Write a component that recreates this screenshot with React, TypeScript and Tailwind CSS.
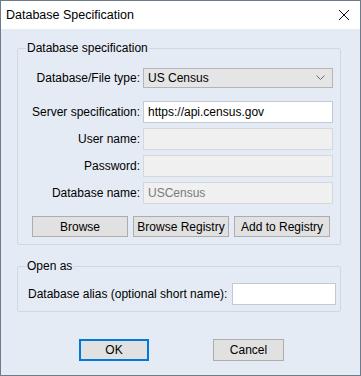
export default function App() {
  const inputBase = "h-[22px] w-[190px] border px-[4px] flex items-center";
  return (
    <div className="w-[361px] h-[376px] border border-[#6e7b8a] bg-[#e5ebf4] flex flex-col font-['Liberation_Sans',Arial,sans-serif] text-[12px] leading-[16px] text-black overflow-hidden">
      <div className="h-[28px] shrink-0 bg-white flex items-center justify-between pl-[5px] pr-[8px]">
        <span className="text-[12.5px]">Database Specification</span>
        <svg width="12" height="12" viewBox="0 0 12 12" className="mr-[2px]">
          <path d="M1 1 L11 11 M11 1 L1 11" stroke="#111" strokeWidth="1" fill="none" />
        </svg>
      </div>
      <div className="flex flex-col pl-[16px] pt-[11px]">
        <fieldset className="w-[324px] border border-[#cfd7e2] rounded-[2px] pt-[12px] pb-[7px] pr-[7px]">
          <legend className="ml-[8px] px-[1px]">Database specification</legend>
          <div className="grid grid-cols-[122px_190px] gap-x-[3px] items-center">
            <span className="text-right whitespace-nowrap">Database/File type:</span>
            <div className="h-[20px] w-[190px] border border-[#b5b5b5] bg-[#e5e5e5] flex items-center justify-between pl-[4px] pr-[7px]">
              <span>US Census</span>
              <svg width="9" height="6" viewBox="0 0 9 6">
                <path d="M0.5 0.5 L4.5 4.5 L8.5 0.5" stroke="#6a6a6a" strokeWidth="1" fill="none" />
              </svg>
            </div>
          </div>
          <div className="grid grid-cols-[122px_190px] gap-x-[3px] gap-y-[5px] items-center mt-[13px]">
            <span className="text-right whitespace-nowrap">Server specification:</span>
            <div className={`${inputBase} bg-white border-[#c3cad4]`}>https://api.census.gov</div>
            <span className="text-right">User name:</span>
            <div className={`${inputBase} bg-[#f0f0f0] border-[#d3d8df]`}></div>
            <span className="text-right">Password:</span>
            <div className={`${inputBase} bg-[#f0f0f0] border-[#d3d8df]`}></div>
            <span className="text-right">Database name:</span>
            <div className={`${inputBase} bg-[#f0f0f0] border-[#d3d8df] text-[#7a7a7a]`}>USCensus</div>
          </div>
          <div className="flex gap-[5px] pl-[14px] mt-[12px]">
            <div className="h-[21px] w-[96px] border border-[#adadad] bg-[#e1e1e1] flex items-center justify-center">Browse</div>
            <div className="h-[21px] w-[96px] border border-[#adadad] bg-[#e1e1e1] flex items-center justify-center">Browse Registry</div>
            <div className="h-[21px] w-[96px] border border-[#adadad] bg-[#e1e1e1] flex items-center justify-center">Add to Registry</div>
          </div>
        </fieldset>
        <fieldset className="w-[324px] mt-[13px] border border-[#cfd7e2] rounded-[2px] pt-[9px] pb-[6px] pr-[4px] pl-[10px]">
          <legend className="ml-[-2px] px-[1px]">Open as</legend>
          <div className="flex items-center justify-between">
            <span className="whitespace-nowrap">Database alias (optional short name):</span>
            <div className="h-[22px] w-[104px] border border-[#c3cad4] bg-white"></div>
          </div>
        </fieldset>
        <div className="flex gap-[64px] pl-[62px] mt-[27px]">
          <div className="h-[22px] w-[70px] border-2 border-[#0078d7] bg-[#e1e1e1] flex items-center justify-center">OK</div>
          <div className="h-[22px] w-[71px] border border-[#adadad] bg-[#e1e1e1] flex items-center justify-center">Cancel</div>
        </div>
      </div>
    </div>
  );
}
